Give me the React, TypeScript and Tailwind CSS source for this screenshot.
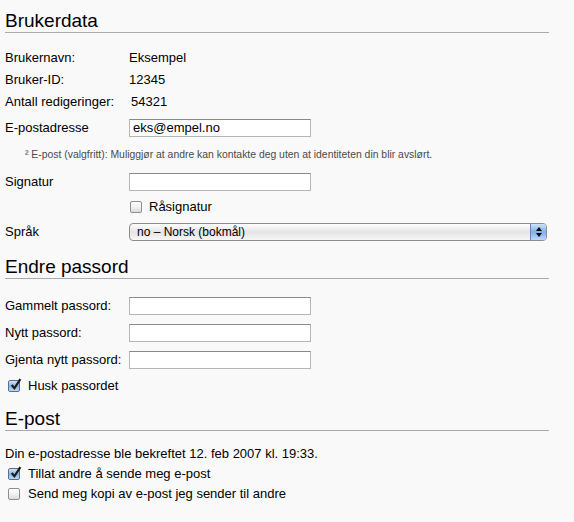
import type { ReactNode } from 'react';

function Heading({ children }: { children: ReactNode }) {
  return (
    <h2 className="pt-[9px] leading-[23px] text-[19px] text-black border-b border-[#aaaaaa]">
      {children}
    </h2>
  );
}

function Checkbox({ checked = false }: { checked?: boolean }) {
  return (
    <span
      className={
        checked
          ? 'relative w-[12px] h-[12px] shrink-0 rounded-[2px] border border-[#5a6f8c] bg-gradient-to-b from-[#cfe3f7] via-[#8db7e6] to-[#b9d6f4]'
          : 'relative w-[12px] h-[12px] shrink-0 rounded-[2px] border border-[#8e8e8e] bg-gradient-to-b from-white via-[#f1f1f1] to-[#dcdcdc]'
      }
    >
      {checked && (
        <svg viewBox="0 0 12 12" className="absolute left-[0px] top-[-3px] w-[13px] h-[13px]">
          <path d="M2.5 6.5 L5 9.5 L10.5 1" fill="none" stroke="#1a1a1a" strokeWidth="2" />
        </svg>
      )}
    </span>
  );
}

function TextInput({ value = '' }: { value?: string }) {
  return (
    <div className="w-[182px] h-[18px] bg-white border border-[#b5b5b5] border-t-[#8a8a8a] flex items-center px-[3px] text-[13px] text-black">
      {value}
    </div>
  );
}

function Row({ label, h, children }: { label: string; h: string; children: ReactNode }) {
  return (
    <div className={`flex items-center ${h}`}>
      <span className="w-[124px] shrink-0">{label}</span>
      {children}
    </div>
  );
}

export default function App() {
  return (
    <div
      className="min-h-[522px] bg-[#f9f9f9] text-[13px] text-black"
      style={{ fontFamily: '"Liberation Sans", Arial, sans-serif' }}
    >
      <div className="ml-[5px] w-[544px]">
        {/* brukerdata */}
        <Heading>Brukerdata</Heading>
        <div className="mt-[14px]">
          <Row label="Brukernavn:" h="h-[22px]">
            <span>Eksempel</span>
          </Row>
          <Row label="Bruker-ID:" h="h-[22px]">
            <span>12345</span>
          </Row>
          <Row label="Antall redigeringer:" h="h-[22px]">
            <span className="ml-[2px]">54321</span>
          </Row>
          <Row label="E-postadresse" h="h-[30px]">
            <TextInput value="eks@empel.no" />
          </Row>
          <div className="h-[24px] flex items-center pl-[20px] text-[10.4px] text-[#4a4a4a]">
            ² E-post (valgfritt): Muliggjør at andre kan kontakte deg uten at identiteten din blir avslørt.
          </div>
          <Row label="Signatur" h="h-[30px]">
            <TextInput />
          </Row>
          <div className="h-[20px] flex items-center pl-[125px] gap-[7px]">
            <Checkbox />
            <span>Råsignatur</span>
          </div>
          <Row label="Språk" h="h-[29px]">
            <div className="relative w-[418px] h-[18px] rounded-[4px] border border-[#8d8d8d] bg-gradient-to-b from-white via-[#e4e4e4] to-[#f7f7f7] flex items-center pl-[7px] text-[12px] overflow-hidden">
              no – Norsk (bokmål)
              <span className="absolute right-0 top-0 bottom-0 w-[16px] border-l border-[#6a84b8] bg-gradient-to-b from-[#cfe2fb] via-[#7fb0ee] to-[#bcd9fb] flex flex-col items-center justify-center gap-[2px]">
                <span className="w-0 h-0 border-l-[3px] border-r-[3px] border-b-[4px] border-l-transparent border-r-transparent border-b-black" />
                <span className="w-0 h-0 border-l-[3px] border-r-[3px] border-t-[4px] border-l-transparent border-r-transparent border-t-black" />
              </span>
            </div>
          </Row>
        </div>

        {/* endre passord */}
        <Heading>Endre passord</Heading>
        <div className="mt-[14px]">
          <Row label="Gammelt passord:" h="h-[26px]">
            <TextInput />
          </Row>
          <Row label="Nytt passord:" h="h-[27px]">
            <TextInput />
          </Row>
          <Row label="Gjenta nytt passord:" h="h-[27px]">
            <TextInput />
          </Row>
          <div className="h-[25px] flex items-center pl-[3px] gap-[8px]">
            <Checkbox checked />
            <span>Husk passordet</span>
          </div>
        </div>

        {/* e-post */}
        <Heading>E-post</Heading>
        <div className="mt-[13px]">
          <div className="h-[20px] flex items-center">
            Din e-postadresse ble bekreftet 12. feb 2007 kl. 19:33.
          </div>
          <div className="h-[20px] flex items-center pl-[3px] gap-[8px]">
            <Checkbox checked />
            <span>Tillat andre å sende meg e-post</span>
          </div>
          <div className="h-[20px] flex items-center pl-[3px] gap-[8px]">
            <Checkbox />
            <span>Send meg kopi av e-post jeg sender til andre</span>
          </div>
        </div>
      </div>
    </div>
  );
}
